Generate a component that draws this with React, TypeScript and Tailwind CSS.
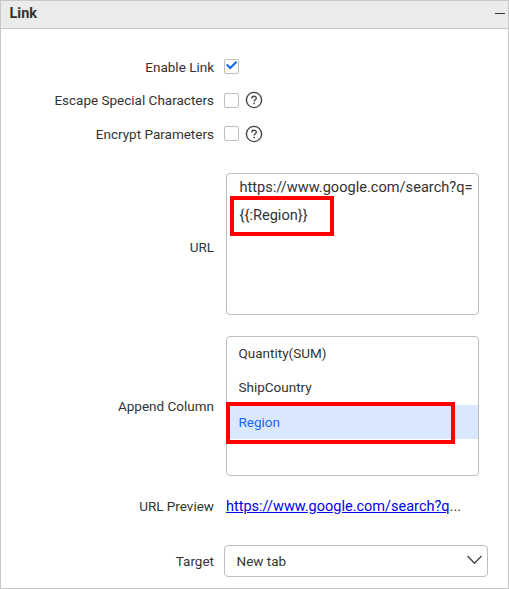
import type { ReactNode } from 'react';

function Row({
  label,
  className,
  labelClassName = '',
  children,
}: {
  label: string;
  className: string;
  labelClassName?: string;
  children: ReactNode;
}) {
  return (
    <div className={`flex items-center ${className}`}>
      <div className={`w-[213px] shrink-0 text-right text-[13.5px] leading-5 whitespace-nowrap ${labelClassName}`}>{label}</div>
      {children}
    </div>
  );
}

function Checkbox({ checked = false }: { checked?: boolean }) {
  return (
    <span role="checkbox" aria-checked={checked} className="ml-[10px] flex size-[15px] items-center justify-center rounded-[2px] border border-[#bfbfbf] bg-white">
      {checked && (
        <svg className="-mt-[2px] shrink-0" width="13" height="13" viewBox="0 0 13 13" fill="none" stroke="#1a66ff" strokeWidth="2.1">
          <path d="M1.8 5.6 L5.2 9 L11.6 2.8" />
        </svg>
      )}
    </span>
  );
}

function HelpIcon() {
  return (
    <svg className="ml-[6px]" width="18" height="18" viewBox="0 0 18 18" fill="none" stroke="#454545">
      <circle cx="9" cy="9" r="7.6" strokeWidth="1.4" />
      <path d="M6.8 7.4 C6.8 4.6 11.3 4.6 11.3 7.1 C11.3 8.8 9.1 8.7 9.1 10.6" strokeWidth="1.4" />
      <path d="M9.1 11.8 V13.2" strokeWidth="1.5" />
    </svg>
  );
}

export default function App() {
  return (
    <div className="flex h-[589px] w-[509px] flex-col overflow-hidden border border-[#c8c8c8] bg-white font-[Roboto,sans-serif] text-[#333]">
      <header className="flex h-7 shrink-0 items-center justify-between border-b border-[#c8c8c8] bg-[#ebebeb] pr-[3px] pb-px pl-[8.5px]">
        <h1 className="text-[14.5px] leading-5 font-bold">Link</h1>
        <span className="-mt-[2px] h-px w-[10px] bg-[#333]" />
      </header>

      <Row label="Enable Link" className="mt-[21px] h-[33px]">
        <Checkbox checked />
      </Row>
      <Row label="Escape Special Characters" className="h-[34px]">
        <Checkbox />
        <HelpIcon />
      </Row>
      <Row label="Encrypt Parameters" className="h-[33px]">
        <Checkbox />
        <HelpIcon />
      </Row>

      <Row label="URL" className="mt-[23px] h-[142px]" labelClassName="pt-[6px]">
        <div className="relative ml-[12px] h-[142px] w-[253px] rounded border border-[#bfbfbf] pl-[12.5px] text-[14.6px] leading-7">
          <div className="-mt-px whitespace-nowrap">https://www.google.com/search?q=</div>
          <div>{'{{:Region}}'}</div>
          <div className="absolute top-[22px] left-[3px] h-10 w-[104px] border-4 border-[#f00]" />
        </div>
      </Row>

      <Row label="Append Column" className="mt-[21px] h-[140px]">
        <div className="relative ml-[12px] flex h-[140px] w-[253px] flex-col rounded border border-[#bfbfbf] text-[13.5px]">
          <div className="flex h-[34px] items-center pb-0.5 pl-[11.5px]">Quantity(SUM)</div>
          <div className="flex h-[34px] items-center pb-0.5 pl-[11.5px]">ShipCountry</div>
          <div className="flex h-[34px] items-center bg-[#d9e8ff] pl-[11.5px] text-[#1a66ff]">Region</div>
          <div className="absolute top-[65px] -left-px h-[42px] w-[229px] border-4 border-[#f00]" />
        </div>
      </Row>

      <Row label="URL Preview" className="mt-5 h-5">
        <div className="ml-[12px] pt-0.5 text-[14.5px] leading-5 whitespace-nowrap">
          <a className="text-[#0000ee] underline">https://www.google.com/search?q</a>...
        </div>
      </Row>

      <Row label="Target" className="mt-[29px] h-8">
        <div className="ml-[10px] flex h-8 w-[264px] items-center justify-between rounded border border-[#bfbfbf] pr-1 pl-[11.5px] text-[13.5px]">
          <span>New tab</span>
          <svg className="-mt-0.5" width="17" height="10" viewBox="0 0 17 10" fill="none" stroke="#454545" strokeWidth="1.3">
            <path d="M1.5 1 L8.5 8.2 L15.5 1" />
          </svg>
        </div>
      </Row>
    </div>
  );
}
